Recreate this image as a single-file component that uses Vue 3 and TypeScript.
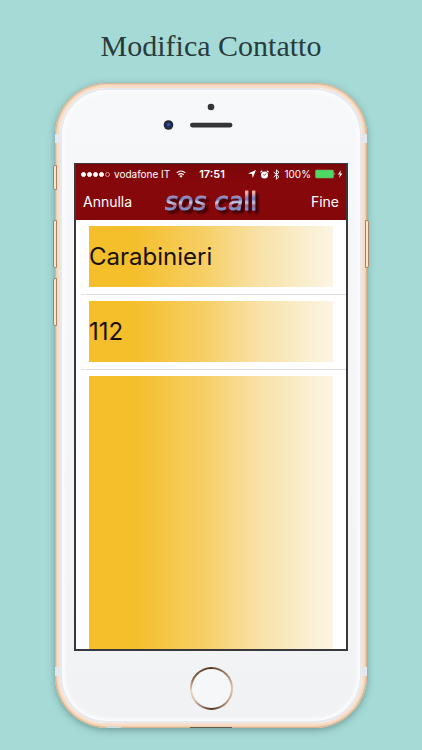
<script setup lang="ts">
import { ref } from 'vue'

const contactName = ref('Carabinieri')
const contactPhone = ref('112')
const contactNotes = ref('')
const signalDots = [true, true, true, true, false]
const sideParts = [
  'band top left',
  'band top right',
  'band bottom left',
  'band bottom right',
  'key mute left',
  'key upper left',
  'key lower left',
  'key upper right',
]
</script>

<template>
  <main class="page">
    <h1 class="title">Modifica Contatto</h1>

    <div class="phone">
      <i v-for="part in sideParts" :key="part" :class="part"></i>
      <i class="dock"></i>
      <i class="jack"></i>

      <div class="face">
        <div class="sensors">
          <svg width="94" height="32" viewBox="0 0 94 32" aria-hidden="true">
            <circle cx="51" cy="7" r="3.3" fill="#343436" />
            <circle cx="8.500" cy="25" r="4.800" fill="#28282e" />
            <circle cx="8.500" cy="25" r="2.800" fill="#20346f" />
            <circle cx="8.500" cy="24.500" r="1.200" fill="#3b63b8" />
            <rect x="30" y="22.700" width="42.500" height="4.800" rx="2.400" fill="#343436" />
          </svg>
        </div>

        <section class="screen">
          <header class="header">
            <div class="status">
              <div class="carrier">
                <span class="dots">
                  <i v-for="(on, index) in signalDots" :key="index" class="dot" :class="{ on }"></i>
                </span>
                <span>vodafone IT</span>
                <svg class="wifi" width="10" height="8" viewBox="0 0 10 8" aria-hidden="true">
                  <path d="M.7 2.800Q5-.8 9.300 2.800M2.300 4.700Q5 2.500 7.700 4.700" fill="none" stroke="#fff" stroke-width="1.100" />
                  <path d="M3.400 6Q5 4.700 6.600 6L5 7.800Z" fill="#fff" />
                </svg>
              </div>
              <span class="time">17:51</span>
              <div class="indicators">
                <svg width="8" height="8" viewBox="0 0 8 8" aria-hidden="true">
                  <path d="M8 0 4.700 8 4 4 0 3.400Z" fill="#fff" />
                </svg>
                <svg width="9" height="9" viewBox="0 0 9 9" aria-hidden="true">
                  <circle cx="4.500" cy="5" r="3.500" fill="#fff" />
                  <path d="M.5 2.200 2.300.7M8.500 2.200 6.700.7" stroke="#fff" stroke-width="1.200" />
                  <path d="M6.200 3.600 4.500 5.300 3.300 4.500" fill="none" stroke="#850709" stroke-width=".8" />
                </svg>
                <svg width="7" height="11" viewBox="0 0 7 11" aria-hidden="true">
                  <path d="M.7 3 6 7.700 3.400 10.200V.8L6 3.300.7 8" fill="none" stroke="#fff" stroke-width="1" />
                </svg>
                <span>100%</span>
                <svg width="28" height="10" viewBox="0 0 28 10" aria-hidden="true">
                  <rect x=".5" y="1" width="18" height="8" rx="1" fill="#4cd964" stroke="#8b9b5e" stroke-width=".6" />
                  <path d="M19.500 3.500q1.500 1.500 0 3Z" fill="#d5dfbd" />
                  <path d="M26.200 1 22.800 5.600H25L23.900 9 27.500 4.400H25.200Z" fill="#fff" />
                </svg>
              </div>
            </div>

            <nav class="bar">
              <button type="button" class="action">Annulla</button>
              <span class="logo"><span class="slant">sos ca</span>ll</span>
              <button type="button" class="action end">Fine</button>
            </nav>
          </header>

          <form class="form" @submit.prevent>
            <div class="row">
              <input v-model="contactName" class="field" type="text" aria-label="Nome" />
            </div>
            <div class="row">
              <input v-model="contactPhone" class="field" type="tel" aria-label="Telefono" />
            </div>
            <div class="row">
              <textarea v-model="contactNotes" class="field notes" aria-label="Note"></textarea>
            </div>
          </form>
        </section>

        <div class="chin">
          <button type="button" class="home" aria-label="Home"></button>
        </div>
      </div>
    </div>
  </main>
</template>

<style>
body {
  margin: 0;
  background: #a6dad7;
}
</style>

<style scoped>
* {
  box-sizing: border-box;
}

.page {
  display: flex;
  flex-direction: column;
  align-items: center;
  min-height: 100vh;
  padding: 28px 55px 22px;
  background: #a6dad7;
  font-family: Inter, "Liberation Sans", sans-serif;
}

.title {
  margin: 0 0 19px;
  color: #293c3c;
  font: 400 30px/36px "Liberation Serif", serif;
  white-space: nowrap;
}

.phone {
  position: relative;
  width: 100%;
  max-width: 420px;
  padding: 5px;
  border-radius: 52px;
  background: #fae0cb;
  box-shadow:
    inset 0 0 0 1px #d3b795,
    inset 0 0 2px 2px #e9c9a9,
    0 2px 7px rgba(50, 90, 85, 0.5);
}

.face {
  padding: 0 14px;
  border-radius: 47px;
  background: linear-gradient(#f7f8fa, #f1f2f4);
  box-shadow:
    inset 0 0 0 2px #e8e9ee,
    inset 0 0 3px 5px #fafbfd;
}

.sensors {
  display: flex;
  justify-content: center;
  height: 75px;
  padding: 12px 8px 0 0;
}

.screen {
  border: 2px solid #38383d;
  border-top-width: 1px;
  background: #fff;
}

.header {
  padding-bottom: 1px;
  background: linear-gradient(#7b0609, #87080b 20px, #850709);
  color: #fff;
}

.status {
  display: grid;
  grid-template-columns: 1fr auto 1fr;
  align-items: center;
  height: 20px;
  padding: 0 3px 0 5px;
  font-size: 10px;
  white-space: nowrap;
}

.carrier,
.indicators,
.dots {
  display: flex;
  align-items: center;
}

.carrier {
  gap: 4px;
}

.wifi {
  margin-left: 2px;
}

.indicators {
  justify-content: flex-end;
  gap: 4px;
}

.dots {
  gap: 1px;
}

.dot {
  width: 5px;
  height: 5px;
  border: 1px solid #d99a9b;
  border-radius: 50%;
}

.dot.on {
  border-color: #fff;
  background: #fff;
}

.time {
  font-size: 11px;
  font-weight: 600;
}

.bar {
  display: grid;
  grid-template-columns: 1fr auto 1fr;
  align-items: center;
  height: 35px;
  padding: 0 7px;
}

.action {
  justify-self: start;
  padding: 0;
  border: 0;
  background: none;
  color: #fff;
  font: 400 14px/20px Inter, "Liberation Sans", sans-serif;
}

.action.end {
  justify-self: end;
}

.logo {
  background: linear-gradient(#f3b2ad 20%, #6a7cc4 40%, #c7cceb 52%, #9a6b8d 62%, #7f9be0 76%);
  background-clip: text;
  color: transparent;
  filter: drop-shadow(3px 3px 1px #350005);
  font: 400 25px/30px "DejaVu Sans", sans-serif;
  -webkit-text-stroke: 1px transparent;
  white-space: nowrap;
}

.slant {
  font-style: oblique;
}

.row {
  padding: 6px 13px 7px;
  border-bottom: 1px solid #dedee4;
  border-image: linear-gradient(90deg, transparent 6px, #dedee4 6px) 1;
}

.row:last-child {
  padding-bottom: 0;
  border-bottom: 0;
}

.field {
  display: block;
  width: 100%;
  height: 61px;
  padding: 0;
  border: 0;
  border-radius: 0;
  outline: 0;
  background: linear-gradient(90deg, #f5be2b 18%, #f6cf66 48%, #f8e2a8 70%, #fcf5e5);
  color: #171103;
  font: 400 24px/30px Inter, "Liberation Sans", sans-serif;
}

.notes {
  height: 273px;
  resize: none;
}

.chin {
  display: flex;
  justify-content: center;
  height: 72px;
  padding-top: 16px;
}

.home {
  width: 43px;
  height: 43px;
  padding: 0;
  border: 2px solid transparent;
  border-radius: 50%;
  background:
    linear-gradient(#f6f7f8, #f6f7f8) padding-box,
    conic-gradient(#5a3d26, #e3c4aa 25%, #c7a58c 35%, #523522 50%, #d9bca8 65%, #f1d8c5 73%, #8f6b4e 82%, #49301d) border-box;
}

.band,
.key,
.dock,
.jack {
  position: absolute;
}

.band {
  width: 5px;
  height: 9px;
  background: #e4e8ec;
}

.top {
  top: 51px;
}

.bottom {
  bottom: 52px;
}

.band.left {
  left: 0;
}

.band.right {
  right: 0;
}

.key {
  width: 4px;
  height: 48px;
  border: 1px solid #a48463;
  background: #f7e3d0;
}

.key.left {
  left: -2px;
  border-radius: 2px 0 0 2px;
}

.key.right {
  right: -2px;
  border-radius: 0 2px 2px 0;
}

.key.mute {
  top: 82px;
  height: 25px;
}

.upper {
  top: 137px;
}

.lower {
  top: 195px;
}

.dock {
  bottom: 0;
  left: 50%;
  width: 42px;
  height: 1px;
  margin-left: -21px;
  background: #635d51;
}

.jack {
  bottom: 0;
  left: 51px;
  width: 15px;
  height: 2px;
  border-radius: 8px 8px 0 0;
  background: #cfdcd8;
}
</style>
